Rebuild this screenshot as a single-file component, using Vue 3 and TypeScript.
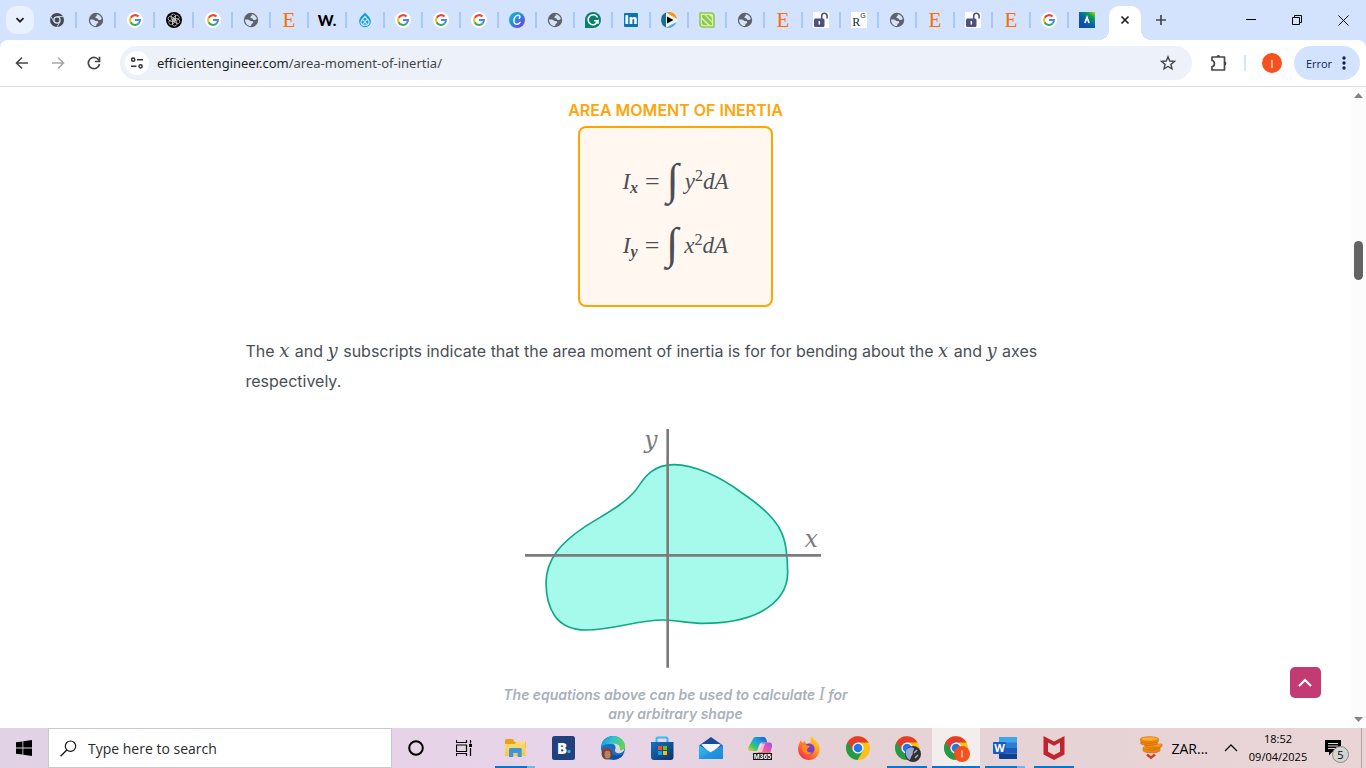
<script setup lang="ts">
interface Tab {
  icon?: string
  title: string
  text?: string
  sup?: string
  look?: string
  wide?: boolean
}
interface TaskItem {
  icon: string
  label: string
  text?: string
  state?: 'open' | 'stacked' | 'active'
}

const globe: Tab = { icon: 'globe', title: 'Page' }
const google: Tab = { icon: 'google', title: 'Google' }
const serifE: Tab = { text: 'E', look: 'serif-e', title: 'E' }
const openAccess: Tab = { icon: 'lock', title: 'Open access' }

const tabs: Tab[] = [
  { icon: 'chromium', title: 'Chrome', wide: true },
  { ...globe, wide: true },
  { ...google, wide: true },
  { icon: 'openai', title: 'ChatGPT', wide: true },
  { ...google, wide: true },
  globe,
  serifE,
  { text: 'W.', look: 'w-dot', title: 'W.' },
  { icon: 'drupal', title: 'Drupal' },
  google,
  google,
  google,
  { icon: 'canva', title: 'Canva' },
  globe,
  { icon: 'grammarly', title: 'Grammarly' },
  { icon: 'linkedin', text: 'in', look: 'in', title: 'LinkedIn' },
  { icon: 'player', title: 'Player' },
  { icon: 'leaf', title: 'Leaf' },
  globe,
  serifE,
  openAccess,
  { text: 'R', sup: 'G', look: 'rg', title: 'ResearchGate' },
  globe,
  serifE,
  openAccess,
  serifE,
  google,
  { icon: 'peak', title: 'Peak' },
]

const tasks: TaskItem[] = [
  { icon: 'folder', label: 'File Explorer', state: 'stacked' },
  { icon: 'booking', label: 'Booking', text: 'B' },
  { icon: 'edge', label: 'Edge' },
  { icon: 'store', label: 'Microsoft Store' },
  { icon: 'mail', label: 'Mail' },
  { icon: 'm365', label: 'Microsoft 365', text: 'M365' },
  { icon: 'firefox', label: 'Firefox' },
  { icon: 'chrome', label: 'Chrome' },
  { icon: 'chrome-photo', label: 'Chrome profile', state: 'open' },
  { icon: 'chrome-i', label: 'Chrome profile I', state: 'active' },
  { icon: 'word', label: 'Word', text: 'W', state: 'stacked' },
  { icon: 'mcafee', label: 'McAfee', state: 'open' },
]
</script>

<template>
  <div class="screen">
    <svg class="sprite" width="0" height="0" aria-hidden="true">
      <defs>
        <linearGradient id="g-canva" x1="0" y1="0" x2="1" y2="1">
          <stop offset="0" stop-color="#00c4cc" /><stop offset=".45" stop-color="#2a8be0" /><stop offset="1" stop-color="#7d2ae8" />
        </linearGradient>
        <linearGradient id="g-peak" x1="1" y1="0" x2="0.3" y2="0.8">
          <stop offset="0" stop-color="#b5e000" /><stop offset=".3" stop-color="#12a150" /><stop offset=".65" stop-color="#0668a0" /><stop offset="1" stop-color="#0a4fae" />
        </linearGradient>
        <linearGradient id="g-folder" x1="0" y1="0" x2="0" y2="1">
          <stop offset="0" stop-color="#ffdf7a" /><stop offset="1" stop-color="#fbc53f" />
        </linearGradient>
        <linearGradient id="g-edge" x1="0" y1="0" x2="1" y2="0.3">
          <stop offset="0" stop-color="#1b8fd8" /><stop offset=".5" stop-color="#2fc3d0" /><stop offset="1" stop-color="#62d651" />
        </linearGradient>
        <linearGradient id="g-store" x1="0" y1="0" x2="1" y2="1">
          <stop offset="0" stop-color="#1173c7" /><stop offset="1" stop-color="#12305f" />
        </linearGradient>
        <linearGradient id="g-mail" x1="0" y1="0" x2="1" y2="1">
          <stop offset="0" stop-color="#35bdf2" /><stop offset="1" stop-color="#1b82d6" />
        </linearGradient>
        <linearGradient id="g-m1" x1="0" y1="1" x2="1" y2="0">
          <stop offset="0" stop-color="#f0d53c" /><stop offset=".3" stop-color="#3cc36b" /><stop offset=".6" stop-color="#1aa2e6" /><stop offset="1" stop-color="#1652c4" />
        </linearGradient>
        <linearGradient id="g-m2" x1="1" y1="0" x2="0" y2="1">
          <stop offset="0" stop-color="#9a55e8" /><stop offset=".5" stop-color="#e85aa6" /><stop offset="1" stop-color="#fb9b62" />
        </linearGradient>
        <linearGradient id="g-fox" x1="1" y1="0" x2="0.2" y2="1">
          <stop offset="0" stop-color="#fff04a" /><stop offset=".45" stop-color="#ff9a1f" /><stop offset="1" stop-color="#f5264f" />
        </linearGradient>
        <linearGradient id="g-coin" x1="0" y1="0" x2="0" y2="1">
          <stop offset="0" stop-color="#ffab2e" /><stop offset="1" stop-color="#e57a00" />
        </linearGradient>
      </defs>

      <symbol id="chromium" viewBox="0 0 16 16">
        <circle cx="8" cy="8" r="7" fill="#45494d" />
        <circle cx="8" cy="8" r="3.700" fill="#d3e3fd" />
        <circle cx="8" cy="8" r="2.400" fill="#45494d" />
        <path d="M8 4.600h6.200M4.900 9.700 1.900 4.500M11.100 9.700 8 14.900" fill="none" stroke="#d3e3fd" stroke-width=".9" />
      </symbol>
      <symbol id="globe" viewBox="0 0 16 16">
        <circle cx="8" cy="8" r="7.200" fill="#5f6368" />
        <path d="M8.600 2.200c2.600.2 4.800 2.100 5.200 4.700l-1.600 1-2.100-.2-.5-1.300-2.100-.3.1-1.600 1.200-.8zM2 7.400l3.200.1 2.300 1.500 2.400.2.300 1.600-1.600 1.200-.6 1.900C4.600 14 2 11.200 2 7.400z" fill="#d3e3fd" />
      </symbol>
      <symbol id="google" viewBox="0 0 16 16">
        <circle cx="8" cy="8" r="8" fill="#fff" />
        <path d="M3.700 5.700A5 5 0 0 1 11.500 4.500" fill="none" stroke="#ea4335" stroke-width="2" />
        <path d="M3.600 10.300A5 5 0 0 1 3.600 5.800" fill="none" stroke="#fbbc05" stroke-width="2" />
        <path d="M11.300 11.700A5 5 0 0 1 3.600 10.200" fill="none" stroke="#34a853" stroke-width="2" />
        <path d="M8 8h5a5 5 0 0 1-1.700 3.700" fill="none" stroke="#4285f4" stroke-width="2" />
      </symbol>
      <symbol id="openai" viewBox="0 0 16 16">
        <circle cx="8" cy="8" r="8" fill="#000" />
        <g fill="none" stroke="#ddd" stroke-width=".7">
          <path id="petal" d="M8 8V4.800l2.600-1.500a2.400 2.400 0 0 1 2.300 3.600L8 9.800" />
          <use href="#petal" transform="rotate(60 8 8)" />
          <use href="#petal" transform="rotate(120 8 8)" />
          <use href="#petal" transform="rotate(180 8 8)" />
          <use href="#petal" transform="rotate(240 8 8)" />
          <use href="#petal" transform="rotate(300 8 8)" />
        </g>
      </symbol>
      <symbol id="drupal" viewBox="0 0 16 16">
        <path d="M8 .5c1 2 5.800 4.300 5.800 8.900a5.800 5.800 0 0 1-11.600 0C2.200 4.800 7 2.500 8 .5z" fill="#0d9ddb" />
        <path d="M8 4.400 4.700 8.100a3.100 3.100 0 0 0 3.300 5 3.100 3.100 0 0 0 3.300-5zM5.500 7.200l4.600 5M10.500 7.200l-4.600 5" fill="none" stroke="#d3e3fd" stroke-width="1.200" />
      </symbol>
      <symbol id="canva" viewBox="0 0 16 16">
        <circle cx="8" cy="8" r="8" fill="url(#g-canva)" />
        <path d="M10.300 6.200c1.200-1.200.6-2.900-1.100-2.900-2.500 0-4.500 2.900-4.300 5.700.2 2.200 1.500 3.500 3.100 3.300 1.300-.1 2.300-.9 3-2" fill="none" stroke="#fff" stroke-width="1.500" stroke-linecap="round" />
      </symbol>
      <symbol id="grammarly" viewBox="0 0 16 16">
        <path d="M0 16V8a8 8 0 1 1 8 8z" fill="#08806c" />
        <path d="M12.600 5.500A5 5 0 1 0 13 8.800H9.200M10.700 11l2.300-2.200v3" fill="none" stroke="#fff" stroke-width="1.500" />
      </symbol>
      <symbol id="linkedin" viewBox="0 0 16 16">
        <rect x="1" y="1" width="14" height="14" rx="1" fill="#0a73b5" />
      </symbol>
      <symbol id="player" viewBox="0 0 16 16">
        <circle cx="8" cy="8" r="8" fill="#f2f2ee" />
        <path d="M5 .6A8 8 0 0 1 16 7z" fill="#f69220" />
        <path d="M5 .6v14.800A8 8 0 0 1 5 .6z" fill="#1d6e8c" />
        <path d="M5 15.400A8 8 0 0 0 15.500 10z" fill="#4fb0de" />
        <path d="M6 4.500v7L12.500 8z" fill="#000" />
      </symbol>
      <symbol id="leaf" viewBox="0 0 16 16">
        <path d="M1 1h11a3 3 0 0 1 3 3v11H4a3 3 0 0 1-3-3z" fill="#d9edc0" stroke="#8fcc4b" stroke-width="1.600" />
        <path d="M3 3h2.500l7.500 8v2h-2L3 5.500zM7 3c4.500 0 6 1.500 6 5v1zM3 7.500 8.500 13H5c-1.500 0-2-1-2-2z" fill="#8cc94a" />
      </symbol>
      <symbol id="lock" viewBox="0 0 16 16">
        <rect width="16" height="16" fill="#fff" />
        <rect x="1" y="6.500" width="10.500" height="8.500" rx="1.500" fill="#50527a" />
        <path d="M8.700 7V4a2.700 2.700 0 0 1 5.400 0v2.400" fill="none" stroke="#50527a" stroke-width="1.600" />
        <path d="M6.300 9v3.500" stroke="#fff" stroke-width="1.500" />
      </symbol>
      <symbol id="peak" viewBox="0 0 16 16">
        <rect width="16" height="16" fill="url(#g-peak)" />
        <path d="M5.900 11 8 5.500 10.100 11" fill="none" stroke="#fff" stroke-width="1.700" />
      </symbol>

      <symbol id="folder" viewBox="0 0 24 24">
        <path d="M2 5c0-1 .5-2 1.500-2H10l1.500 3H23v6H2z" fill="#e9a215" />
        <path d="M2 8h10l2-2.500h8.500V20H2z" fill="url(#g-folder)" />
        <path d="M6 21v-7.500c0-1 .7-1.500 1.500-1.500h9.500c1 0 1.700.5 1.700 1.500V21h-4v-4h-4.500v4z" fill="#3b97dd" />
      </symbol>
      <symbol id="booking" viewBox="0 0 24 24">
        <rect width="23" height="24" rx="2.500" fill="#21417c" />
        <circle cx="17" cy="15.500" r="1.700" fill="#1cb2f5" />
      </symbol>
      <symbol id="edge" viewBox="0 0 24 24">
        <circle cx="12" cy="12" r="12" fill="#1570c4" />
        <path d="M0 12C0 4 6 0 12 0c7 0 12 5 12 10.500 0 4-3 6-6 6s-5-1-4-2.500c1.500-2 1-5.500-3-6C6 7.500 1 9 0 12z" fill="url(#g-edge)" />
        <path d="M9 13c0 6 6 8 13.500 5C20 23 13 25 8 22z" fill="#124c9a" />
        <path d="M14 14c1.500-3 .5-5-2-6.500 5 0 8 3 7 6.500 1 1 3 0 4.500-1.500C23 18 14 19 14 14z" fill="#e4d3e2" />
        <circle cx="6" cy="18" r="5.500" fill="#704536" />
        <ellipse cx="6.500" cy="18.500" rx="3" ry="4" fill="#ba8064" />
        <path d="M1 14.500C3 11.500 8 10.500 11 15z" fill="#a23a2b" />
      </symbol>
      <symbol id="store" viewBox="0 0 24 24">
        <path d="M6.500 7V3c0-1 .7-1.500 1.500-1.500h8c.8 0 1.500.5 1.500 1.500v4" fill="none" stroke="#38b9ee" stroke-width="2" />
        <path d="M1 6h22.500v15c0 2-1 3-3 3H4c-2 0-3-1-3-3z" fill="url(#g-store)" />
        <path d="M8 10h4v4H8z" fill="#f25022" /><path d="M13 10h4v4h-4z" fill="#7fba00" />
        <path d="M8 15h4v4H8z" fill="#00a4ef" /><path d="M13 15h4v4h-4z" fill="#ffb900" />
      </symbol>
      <symbol id="mail" viewBox="0 0 24 24">
        <path d="M0 9.500 12 1l12 8.500V14H0z" fill="#174f96" />
        <path d="M2 8.500h20L12 18z" fill="#f4f6f8" />
        <path d="M0 9l12 7.500L24 9v14H0z" fill="url(#g-mail)" />
        <path d="M3 8h18l-9 8z" fill="#f4f6f8" />
        <path d="M0 23 24 9v14z" fill="#1c8fe0" opacity=".6" />
      </symbol>
      <symbol id="m365" viewBox="0 0 24 24">
        <path d="M5 3c1-2 2-2 4-2h6c2 0 3 1 3.500 3l.8 2.500h-4.500c-2 0-3 1-3.800 3L9 15H2c-2 0-2.500-2-1.500-4z" fill="url(#g-m1)" />
        <path d="M15 6.500h6c2 0 3.500 1 3 4L22 18H9l4-8.500c.5-2 1-3 2-3z" fill="url(#g-m2)" />
        <path d="M13 7.500h4L14 16h-4z" fill="#fff" opacity=".6" />
        <rect x="5" y="17" width="19" height="7" fill="#111" />
      </symbol>
      <symbol id="firefox" viewBox="0 0 24 24">
        <path d="M15 0c1 3 4 4 6 7 4 6 1 17-9 17C4 24-1 17 2 8l2-4 1 3 3-2c0 2 1 3 3 3l3-2c-1-3 0-5 1-6z" fill="url(#g-fox)" />
        <circle cx="12" cy="13" r="5.500" fill="#7a3ec8" />
        <path d="M5 10c3-2 6 0 8 0-1 2-3 2-3 4s3 3 5 2c-1 4-10 4-10-6z" fill="#ff8a1c" />
      </symbol>
      <symbol id="chrome" viewBox="0 0 24 24">
        <circle cx="12" cy="12" r="12" fill="#fbc116" />
        <path d="M12 12 1.600 6A12 12 0 0 0 11.500 24L17.500 14z" fill="#229c4b" />
        <path d="M1.600 6a12 12 0 0 1 20.900.5H12l-5 8.500z" fill="#e33b2e" />
        <circle cx="12" cy="12" r="5.600" fill="#fff" />
        <circle cx="12" cy="12" r="4.300" fill="#2377ea" />
      </symbol>
      <symbol id="chrome-photo" viewBox="0 0 28 28">
        <use href="#chrome" width="24" height="24" x="2" y="2" />
        <circle cx="20" cy="20" r="8" fill="#303137" />
        <path d="M13 16c3-4 8-3 8-1l-4 11c-4-2-5-6-4-10z" fill="#8da9dd" />
        <path d="M16 17l3 3-3 3M21 19l3-3M22 24l3-3" stroke="#b4abab" stroke-width="1.500" fill="none" />
      </symbol>
      <symbol id="chrome-i" viewBox="0 0 28 28">
        <use href="#chrome" width="24" height="24" x="2" y="2" />
        <circle cx="20" cy="20" r="8" fill="#f4511e" />
        <path d="M20 16.500v7" stroke="#ffd0bd" stroke-width="1.300" />
      </symbol>
      <symbol id="word" viewBox="0 0 24 24">
        <path d="M6 1h18v6H6z" fill="#41a5ee" /><path d="M6 6.500h18V12H6z" fill="#2b7cd3" />
        <path d="M6 12h18v5.500H6z" fill="#185abd" /><path d="M6 17.500h18V23H7q-1 0-1-1z" fill="#103f91" />
        <rect y="6" width="13" height="12" rx="1" fill="#185abd" />
      </symbol>
      <symbol id="mcafee" viewBox="0 0 24 24">
        <path d="M1.500 0 12 5.500 22.500 0v18.500L12 24 1.500 18.500zM6 6.500v9.300l6 3.200 6-3.200V6.500l-6 3.200z" fill="#c0252d" fill-rule="evenodd" />
      </symbol>
    </svg>

    <header class="tabstrip">
      <button class="tab-search" aria-label="Search tabs">
        <svg width="10" height="10" viewBox="0 0 10 10"><path d="M1.500 3.200 5 6.700l3.500-3.500" fill="none" stroke="#1f1f1f" stroke-width="1.800" /></svg>
      </button>
      <nav class="tabs" aria-label="Tabs">
        <button v-for="(tab, i) in tabs" :key="i" class="tab" :class="{ wide: tab.wide }" :aria-label="tab.title">
          <span class="favicon" :class="tab.look">
            <svg v-if="tab.icon" width="16" height="16"><use :href="'#' + tab.icon" /></svg>
            <span v-if="tab.text" class="letters">{{ tab.text }}</span>
            <span v-if="tab.sup" class="raised">{{ tab.sup }}</span>
          </span>
        </button>
      </nav>
      <button class="tab-active" aria-label="Close tab">
        <svg width="10" height="10" viewBox="0 0 10 10"><path d="M1.500 1.500l7 7M8.500 1.500l-7 7" stroke="#1f1f1f" stroke-width="1.700" /></svg>
      </button>
      <button class="new-tab" aria-label="New tab">
        <svg width="12" height="12" viewBox="0 0 12 12"><path d="M6 1v10M1 6h10" stroke="#474747" stroke-width="1.700" /></svg>
      </button>
      <div class="window-controls">
        <button aria-label="Minimise"><svg width="10" height="10" viewBox="0 0 10 10"><path d="M0 4.500h10" stroke="#000" /></svg></button>
        <button aria-label="Restore"><svg width="10" height="10" viewBox="0 0 10 10"><path d="M.5 2.500h7v7h-7zM2.500 2.500v-2h7v7h-2" fill="none" stroke="#000" /></svg></button>
        <button aria-label="Close"><svg width="11" height="11" viewBox="0 0 11 11"><path d="M.5.5l10 10M10.500.5l-10 10" stroke="#000" /></svg></button>
      </div>
    </header>

    <div class="toolbar">
      <div class="nav-buttons">
        <button aria-label="Back"><svg width="14" height="14" viewBox="0 0 14 14"><path d="M13 7H2M7 1.500 1.500 7 7 12.500" fill="none" stroke="#474747" stroke-width="1.600" /></svg></button>
        <button aria-label="Forward"><svg width="14" height="14" viewBox="0 0 14 14"><path d="M1 7h11M7 1.500 12.500 7 7 12.500" fill="none" stroke="#a9a9a9" stroke-width="1.600" /></svg></button>
        <button aria-label="Reload"><svg width="14" height="14" viewBox="0 0 14 14"><path d="M12 4.500A5.600 5.600 0 1 0 12.500 8" fill="none" stroke="#474747" stroke-width="1.700" /><path d="M12.500.8v4.700H7.800" fill="none" stroke="#474747" stroke-width="1.700" /></svg></button>
      </div>
      <div class="omnibox">
        <button class="site-info" aria-label="Site information">
          <svg width="12" height="12" viewBox="0 0 12 12"><g fill="none" stroke="#333" stroke-width="1.500"><circle cx="2.200" cy="2.700" r="1.600" /><path d="M6 2.700h6M0 9.300h5.500" /><circle cx="9.600" cy="9.300" r="1.600" /></g></svg>
        </button>
        <a class="url" href="#">efficientengineer.com<span>/area-moment-of-inertia/</span></a>
        <button class="star" aria-label="Bookmark">
          <svg width="16" height="16" viewBox="0 0 16 16"><path d="M8 1.800l1.800 4.200 4.600.4-3.500 3 1.100 4.500L8 11.500l-4 2.400 1.100-4.500-3.500-3 4.600-.4z" fill="none" stroke="#474747" stroke-width="1.400" /></svg>
        </button>
      </div>
      <button class="extensions" aria-label="Extensions">
        <svg width="18" height="18" viewBox="0 0 18 18"><path d="M2 3h12.500v13H2v-3.500c3.200 0 3.200-6 0-6z" fill="none" stroke="#474747" stroke-width="1.700" stroke-linejoin="round" /><path d="M6.500 3a1.900 1.900 0 0 1 3.800 0zM14.500 7.600a1.900 1.900 0 0 1 0 3.800z" fill="#474747" /></svg>
      </button>
      <span class="divider"></span>
      <button class="avatar">I</button>
      <button class="error-pill">Error
        <svg width="4" height="14" viewBox="0 0 4 14"><g fill="#0b2558"><circle cx="2" cy="2" r="1.700" /><circle cx="2" cy="7" r="1.700" /><circle cx="2" cy="12" r="1.700" /></g></svg>
      </button>
    </div>

    <div class="viewport">
      <main class="page">
        <section class="definition">
          <h2>AREA MOMENT OF INERTIA</h2>
          <div class="formula-box">
            <p class="formula">
              <i>I</i><sub>x</sub><span class="eq">=</span><span class="int">∫</span><i>y</i><sup>2</sup><i>dA</i>
            </p>
            <p class="formula">
              <i>I</i><sub>y</sub><span class="eq">=</span><span class="int">∫</span><i>x</i><sup>2</sup><i>dA</i>
            </p>
          </div>
        </section>
        <p class="body-text">
          The <i>x</i> and <i>y</i> subscripts indicate that the area moment of inertia is for for bending about the <i>x</i> and <i>y</i> axes respectively.
        </p>
        <figure>
          <svg class="diagram" width="302" height="240" viewBox="75 57 906 720" role="img" aria-label="Arbitrary shape with x and y axes">
            <path d="M522 164C582 164 660 200 722 246C790 292 838 335 852 388C862 420 861 445 863 485C864 540 830 580 782 606C730 633 670 640 610 640C565 640 530 630 490 630C410 630 340 660 258 660C165 660 139 590 138 520C138 450 180 400 255 350C310 315 370 285 405 243C425 220 445 164 522 164Z" fill="#a5faeb" stroke="#12a886" stroke-width="5" />
            <path d="M75 436H963M503 57V773" stroke="#7c7c7c" stroke-width="8" />
            <g class="axis-labels"><text x="433" y="114">y</text><text x="914" y="412">x</text></g>
          </svg>
          <figcaption>The equations above can be used to calculate <span>I</span> for any arbitrary shape</figcaption>
        </figure>
      </main>
      <div class="scrollbar">
        <svg width="9" height="5" viewBox="0 0 9 5"><path d="M0 5 4.500 0 9 5z" fill="#858585" /></svg>
        <span class="thumb"></span>
        <svg class="down" width="9" height="5" viewBox="0 0 9 5"><path d="M0 0l4.500 5L9 0z" fill="#858585" /></svg>
      </div>
      <button class="to-top" aria-label="Back to top">
        <svg width="15" height="9" viewBox="0 0 15 9"><path d="M1 8l6-6 6 6" fill="none" stroke="#fff" stroke-width="2.200" /></svg>
      </button>
    </div>

    <footer class="taskbar">
      <button class="start" aria-label="Start">
        <svg width="16" height="16" viewBox="0 0 16 16"><path d="M0 2.300 6.500 1.400v6.200H0zM7.300 1.300 16 0v7.600H7.300zM0 8.400h6.500v6.200L0 13.700zM7.300 8.400H16V16l-8.700-1.300z" fill="#000" /></svg>
      </button>
      <label class="search">
        <svg width="17" height="17" viewBox="0 0 17 17"><circle cx="10.500" cy="6.200" r="5.200" fill="none" stroke="#111" stroke-width="1.200" /><path d="M6.800 10 .6 16.300" stroke="#111" stroke-width="1.300" /></svg>
        <input type="text" placeholder="Type here to search" aria-label="Search" />
      </label>
      <button class="sys" aria-label="Cortana">
        <svg width="16" height="16" viewBox="0 0 16 16"><circle cx="8" cy="8" r="6.800" fill="none" stroke="#000" stroke-width="2" /></svg>
      </button>
      <button class="sys" aria-label="Task view">
        <svg width="16" height="16" viewBox="0 0 16 16"><path d="M.5 0v2.500h10V0M.5 16v-2.500h10V16M.5 5h10v6.500H.5zM14.500 0v3.500M14.500 8v8" fill="none" stroke="#000" stroke-width="1.200" /><path d="M13 4h3v3h-3z" /></svg>
      </button>
      <nav class="tasks" aria-label="Applications">
        <button v-for="task in tasks" :key="task.icon" class="task" :class="task.state" :aria-label="task.label">
          <span class="app" :class="'app-' + task.icon">
            <svg :class="{ profile: task.icon.startsWith('chrome-') }"><use :href="'#' + task.icon" /></svg>
            <span v-if="task.text" class="letters">{{ task.text }}</span>
          </span>
        </button>
      </nav>
      <div class="tray">
        <button class="currency">
          <svg width="24" height="24" viewBox="0 0 24 24"><g fill="url(#g-coin)" stroke="#c96500" stroke-width=".6"><path d="M4 12v2.500c0 3 17 3 17 0V12z" /><ellipse cx="12.500" cy="12" rx="8.500" ry="2.300" /><path d="M6 8v2c0 3 17 3 17 0V8z" /><ellipse cx="10" cy="7" rx="8.500" ry="2.500" /><path d="M1.500 3v2c0 3 18 3 18 0V3z" /><ellipse cx="10.500" cy="3" rx="9" ry="2.300" fill="#ffab2e" /></g><path d="M8 18.500l4 3.200 4-3.200" fill="none" stroke="#cf3f21" stroke-width="2.600" /></svg>
          <span>ZAR...</span>
        </button>
        <button class="chevron" aria-label="Show hidden icons">
          <svg width="14" height="8" viewBox="0 0 14 8"><path d="M1 7l6-6 6 6" fill="none" stroke="#111" stroke-width="1.300" /></svg>
        </button>
        <button class="clock"><span>18:52</span><span>09/04/2025</span></button>
        <button class="notifications" aria-label="5 notifications">
          <svg width="16" height="16" viewBox="0 0 16 16"><path d="M0 0h16v12H7l-3 3.500V12H0z" fill="#000" /><path d="M3 3.500h10M3 6h10M3 8.500h7" stroke="#e8d4d6" /></svg>
          <span class="badge">5</span>
        </button>
        <span class="show-desktop"></span>
      </div>
    </footer>
  </div>
</template>

<style>
body {
  margin: 0;
  overflow: hidden;
}
</style>

<style scoped>
* {
  box-sizing: border-box;
}
button {
  display: flex;
  align-items: center;
  justify-content: center;
  flex: none;
  padding: 0;
  border: 0;
  background: none;
  color: inherit;
  font: inherit;
}
svg {
  display: block;
  flex: none;
}
.screen {
  display: flex;
  flex-direction: column;
  height: 100vh;
  background: #d3e3fd;
  font-family: "Open Sans", sans-serif;
}
.sprite {
  position: absolute;
}
.tabstrip {
  display: flex;
  align-items: center;
  height: 40px;
}
.tab-search {
  width: 28px;
  height: 28px;
  margin: 0 3px 0 6px;
  border-radius: 10px;
  background: #e9f0fe;
}
.tabs {
  display: flex;
}
.tab {
  position: relative;
  width: 38px;
  height: 28px;
}
.tab.wide {
  width: 39px;
}
.tab:not(:last-child)::after {
  content: "";
  position: absolute;
  right: -1px;
  top: 6px;
  width: 2px;
  height: 16px;
  background: #a8c7fa;
}
.favicon {
  position: relative;
  display: flex;
  align-items: center;
  justify-content: center;
  width: 16px;
  height: 16px;
}
.serif-e {
  color: #ff6c00;
  font: 21px/24px "Liberation Serif", serif;
}
.w-dot {
  color: #000;
  font: 900 15px/16px Lato, sans-serif;
}
.in .letters {
  position: absolute;
  inset: 0;
  color: #fff;
  font: 800 13px/14px "Open Sans", sans-serif;
}
.rg {
  align-items: flex-start;
  background: #fff;
  color: #12312d;
}
.rg .letters {
  padding-top: 4px;
  font: 12px/12px "Liberation Serif", serif;
}
.rg .raised {
  font: 7px/8px "Liberation Sans", sans-serif;
}
.tab-active {
  position: relative;
  width: 32px;
  height: 34px;
  margin: 6px 0 0 3px;
  padding-bottom: 6px;
  border-radius: 10px 10px 0 0;
  background: #fff;
}
.tab-active::before,
.tab-active::after {
  content: "";
  position: absolute;
  bottom: 0;
  width: 10px;
  height: 10px;
}
.tab-active::before {
  right: 100%;
  background: radial-gradient(circle at 0 0, transparent 10px, #fff 10px);
}
.tab-active::after {
  left: 100%;
  background: radial-gradient(circle at 100% 0, transparent 10px, #fff 10px);
}
.new-tab {
  width: 28px;
  height: 28px;
  margin-left: 6px;
}
.window-controls {
  display: flex;
  margin-left: auto;
}
.window-controls button {
  width: 46px;
  height: 40px;
}
.toolbar {
  display: flex;
  align-items: center;
  height: 46px;
  padding-right: 6px;
  border-radius: 8px 8px 0 0;
  background: #fff;
}
.nav-buttons {
  display: flex;
  gap: 8px;
  padding: 0 12px 0 8px;
}
.nav-buttons button {
  width: 28px;
  height: 28px;
}
.omnibox {
  display: flex;
  align-items: center;
  flex: 1;
  height: 34px;
  padding: 0 16px 0 5px;
  border-radius: 17px;
  background: #ecf1fa;
}
.site-info {
  width: 24px;
  height: 24px;
  border-radius: 50%;
  background: #fff;
}
.url {
  flex: 1;
  padding-left: 8px;
  color: #1f1f1f;
  font: 13px/18px "Noto Sans", sans-serif;
  text-decoration: none;
}
.url span {
  color: #474747;
}
.extensions {
  width: 28px;
  height: 28px;
  margin-left: 13px;
}
.divider {
  width: 2px;
  height: 16px;
  margin: 0 16px 0 11px;
  background: #d3e3fd;
}
.avatar {
  width: 20px;
  height: 20px;
  border-radius: 50%;
  background: #f4511e;
  color: #fff;
  font-size: 11px;
}
.error-pill {
  gap: 10px;
  width: 66px;
  height: 34px;
  margin-left: 12px;
  padding-right: 2px;
  border-radius: 17px;
  background: #d3e3fd;
  color: #0b2558;
  font-size: 11px;
}
.viewport {
  position: relative;
  display: flex;
  flex: 1;
  min-height: 0;
  overflow: hidden;
  border-top: 1px solid #dcdfe3;
  background: #fff;
}
.page {
  flex: 1;
  color: #4a4f57;
  font: 16px/30px Inter, sans-serif;
}
.definition {
  display: flex;
  flex-direction: column;
  align-items: center;
  padding-top: 8px;
}
h2 {
  margin: 0;
  color: #ffa50a;
  font-size: 16px;
  font-weight: 600;
  line-height: 31px;
}
.formula-box {
  width: 195px;
  height: 181px;
  padding: 22px 0;
  border: 2px solid #ffa500;
  border-radius: 8px;
  background: #fff7f0;
}
.formula {
  display: flex;
  align-items: center;
  justify-content: center;
  height: 64px;
  margin: 0;
  font-family: "Liberation Serif", serif;
  font-size: 23px;
}
.formula sub,
.formula sup {
  font-size: 16px;
  line-height: 16px;
}
.formula sub {
  padding-top: 12px;
  font-style: italic;
  font-weight: 700;
}
.formula sup {
  padding-bottom: 12px;
}
.eq {
  margin: 0 7px;
  font-size: 26px;
}
.int {
  margin-right: 6px;
  padding-bottom: 4px;
  font-size: 44px;
  font-style: italic;
  line-height: 48px;
}
.body-text {
  width: 860px;
  max-width: 90%;
  margin: 29px auto 33px;
}
.body-text i {
  padding-right: 1px;
  font: italic 18px/20px "DejaVu Serif", serif;
}
figure {
  display: flex;
  flex-direction: column;
  align-items: center;
  margin: 0;
}
.diagram {
  overflow: visible;
}
.axis-labels {
  fill: #7c7c7c;
  font: italic 70px "DejaVu Serif", serif;
}
figcaption {
  width: 350px;
  margin-top: 16px;
  color: #a9b0bb;
  font-size: 14px;
  font-style: italic;
  font-weight: 600;
  line-height: 19px;
  text-align: center;
}
figcaption span {
  font: italic 18px/18px "Liberation Serif", serif;
}
.scrollbar {
  display: flex;
  flex-direction: column;
  align-items: center;
  width: 15px;
  padding: 6px 0;
  background: #fcfcfc;
}
.thumb {
  width: 9px;
  height: 39px;
  margin-top: 143px;
  border-radius: 5px;
  background: #636363;
}
.down {
  margin-top: auto;
}
.to-top {
  position: absolute;
  right: 45px;
  bottom: 30px;
  width: 31px;
  height: 31px;
  border-radius: 5px;
  background: #c23b72;
}
.taskbar {
  display: flex;
  height: 40px;
  background: linear-gradient(90deg, #e2d2e6, #e8d4e8 45%, #e5d2d7 60%, #e9d5d6);
}
.start {
  width: 48px;
}
.search {
  display: flex;
  align-items: center;
  width: 344px;
  padding-left: 11px;
  border: 1px solid #c9c9c9;
  background: #fff;
}
.search input {
  flex: 1;
  min-width: 0;
  padding: 0 0 0 11px;
  border: 0;
  outline: 0;
  background: none;
  font: 14px "Open Sans", sans-serif;
}
.search input::placeholder {
  color: #2b2b2b;
  opacity: 1;
}
.sys {
  width: 48px;
}
.tasks {
  display: flex;
  gap: 1px;
  margin-left: 3px;
}
.task {
  position: relative;
  width: 48px;
}
.app {
  position: relative;
}
.app svg {
  width: 24px;
  height: 24px;
}
.app svg.profile {
  width: 28px;
  height: 28px;
}
.app .letters {
  position: absolute;
  color: #fff;
}
.app-booking .letters {
  left: 5px;
  top: 4px;
  font: 800 15px/16px "Open Sans", sans-serif;
}
.app-m365 .letters {
  left: 5px;
  bottom: 0;
  width: 19px;
  font: 700 7px/7px "Liberation Sans", sans-serif;
}
.app-word .letters {
  left: 0;
  top: 6px;
  width: 13px;
  font: 700 11px/12px "Open Sans", sans-serif;
}
.task.open::after,
.task.stacked::after,
.task.active::after {
  content: "";
  position: absolute;
  bottom: 0;
  left: 4px;
  right: 4px;
  height: 2px;
  background: #0078d7;
}
.task.stacked::after {
  background: linear-gradient(90deg, #0078d7 80%, #76b2e4 80%);
}
.task.active {
  background: #f3eded;
}
.task.active::after {
  left: 0;
  right: 0;
}
.tray {
  display: flex;
  margin-left: auto;
}
.currency {
  gap: 8px;
  padding-right: 7px;
  font-size: 14px;
}
.chevron {
  width: 32px;
}
.clock {
  flex-direction: column;
  width: 62px;
  font-size: 11px;
  line-height: 18px;
}
.notifications {
  position: relative;
  width: 52px;
  padding-right: 4px;
}
.badge {
  position: absolute;
  right: 12px;
  bottom: 5px;
  width: 17px;
  height: 17px;
  border: 1px solid #888;
  border-radius: 50%;
  background: #d6d3d4;
  font-size: 11px;
  line-height: 15px;
}
.show-desktop {
  width: 5px;
  border-left: 1px solid #b5a3a8;
}
</style>
